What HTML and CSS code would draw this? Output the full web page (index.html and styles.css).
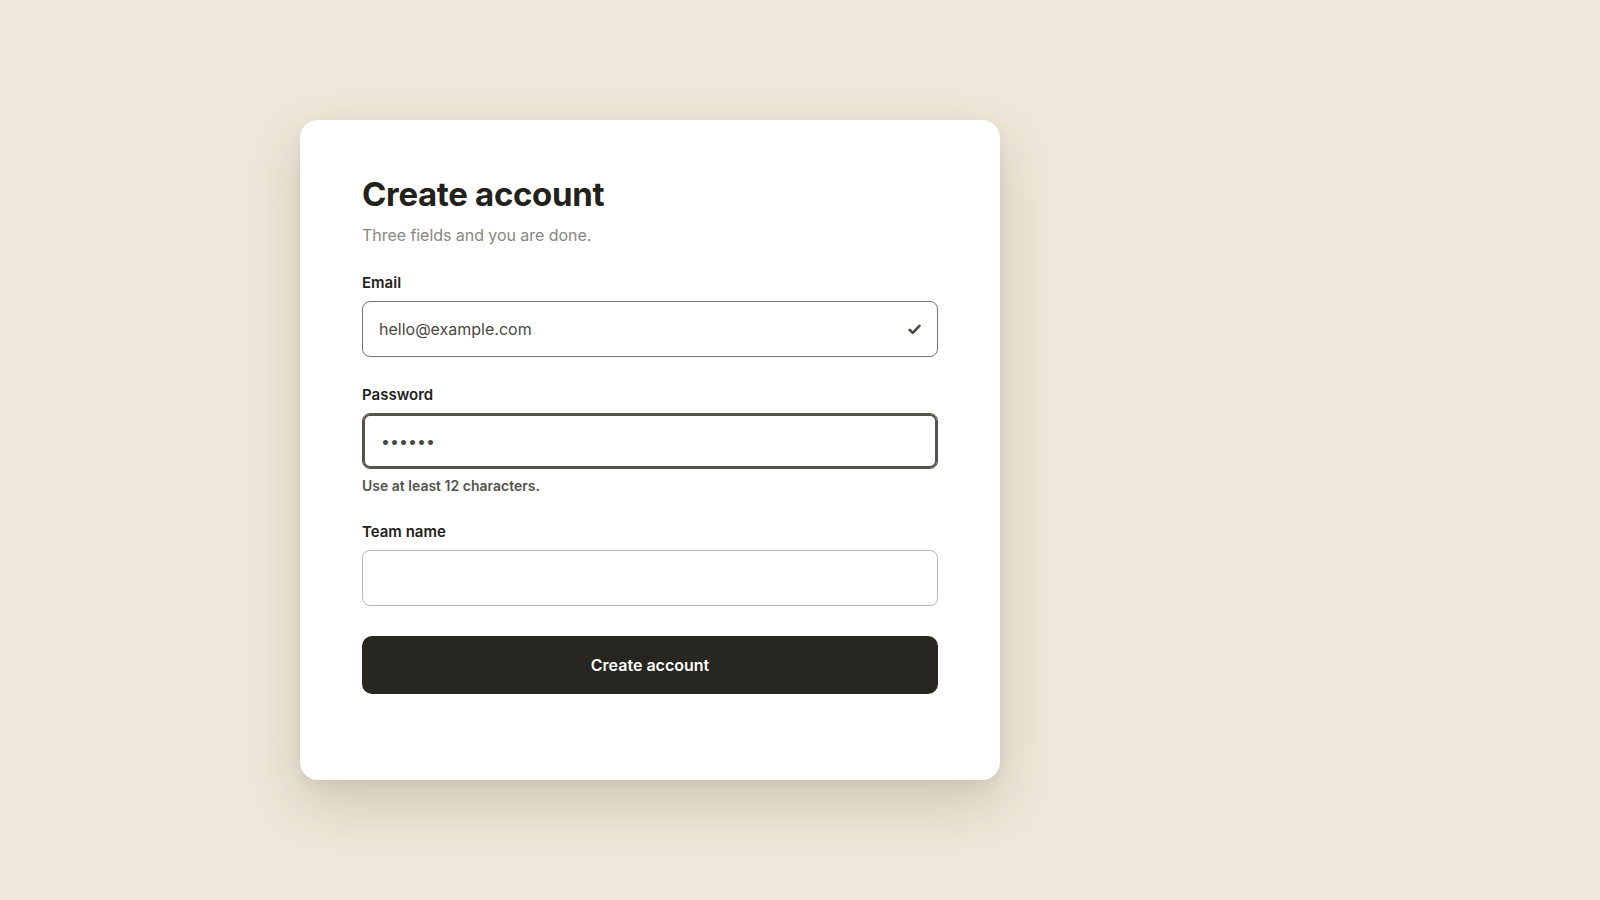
FILE: index.html
```html
<!DOCTYPE html>
<html lang="en">
<head>
<meta charset="utf-8">
<title>Create account</title>
<link rel="stylesheet" href="styles.css">
</head>
<body>
<main class="page">
  <section class="card">
    <header class="card-head">
      <h1 class="title">Create account</h1>
      <p class="subtitle">Three fields and you are done.</p>
    </header>
    <form class="form">
      <div class="field">
        <label class="label" for="email">Email</label>
        <div class="control">
          <input class="input input-valid" id="email" type="email" value="hello@example.com">
          <svg class="check" width="13" height="11" viewBox="0 0 13 11" aria-hidden="true">
            <path d="M1.6 5.8 L4.8 8.9 L11.4 1.8" fill="none" stroke="#4f4d47" stroke-width="2.6" stroke-linecap="round" stroke-linejoin="round"/>
          </svg>
        </div>
      </div>
      <div class="field">
        <label class="label" for="password">Password</label>
        <div class="control">
          <input class="input input-focus" id="password" type="password" value="secret">
        </div>
        <p class="hint">Use at least 12 characters.</p>
      </div>
      <div class="field">
        <label class="label" for="team">Team name</label>
        <div class="control">
          <input class="input input-empty" id="team" type="text" value="">
        </div>
      </div>
      <button class="submit" type="button">Create account</button>
    </form>
  </section>
</main>
</body>
</html>
```
FILE: styles.css
```css
* { box-sizing: border-box; }
html, body { margin: 0; padding: 0; }
body {
  background: #efe8da;
  font-family: Inter, "Noto Sans", "Liberation Sans", sans-serif;
  color: #22211c;
  height: 900px;
  overflow: hidden;
}
.page {
  height: 900px;
  display: flex;
  align-items: center;
  padding-left: 300px;
}
.card {
  width: 700px;
  height: 660px;
  background: #ffffff;
  border-radius: 18px;
  padding: 55px 62px 0 62px;
  box-shadow: 0 22px 55px rgba(70, 58, 30, 0.20), 0 4px 12px rgba(70, 58, 30, 0.06);
}
.card-head { margin-bottom: 26px; }
.title {
  margin: 0;
  font-size: 33px;
  line-height: 39px;
  font-weight: 700;
  letter-spacing: -0.01em;
  color: #22211c;
}
.subtitle {
  margin: 9px 0 0 0;
  font-size: 16px;
  line-height: 24px;
  letter-spacing: -0.05px;
  color: #8a877f;
}
.form {
  display: flex;
  flex-direction: column;
  gap: 28px;
}
.field {
  display: flex;
  flex-direction: column;
}
.label {
  font-size: 15px;
  line-height: 20px;
  font-weight: 600;
  color: #22211c;
  margin-bottom: 8px;
}
.control { position: relative; }
.input {
  display: block;
  width: 100%;
  height: 56px;
  border: 1px solid #76746e;
  border-radius: 8px;
  padding: 0 44px 0 16px;
  font-family: inherit;
  font-size: 16px;
  color: #4a4843;
  background: #fff;
  outline: none;
}
.input-focus {
  border-color: #55534c;
  box-shadow: inset 0 0 0 2px #55534c;
  padding-left: 18px;
}
.input-empty { border-color: #b9b7b1; }
.check {
  position: absolute;
  right: 17px;
  top: 23px;
}
.hint {
  margin: 8px 0 0 0;
  font-size: 14px;
  line-height: 17px;
  font-weight: 600;
  color: #55534c;
}
.submit {
  margin-top: 2px;
  height: 58px;
  border: 0;
  border-radius: 10px;
  background: #272620;
  color: #ffffff;
  font-family: inherit;
  font-size: 16px;
  font-weight: 600;
  cursor: pointer;
}
```
